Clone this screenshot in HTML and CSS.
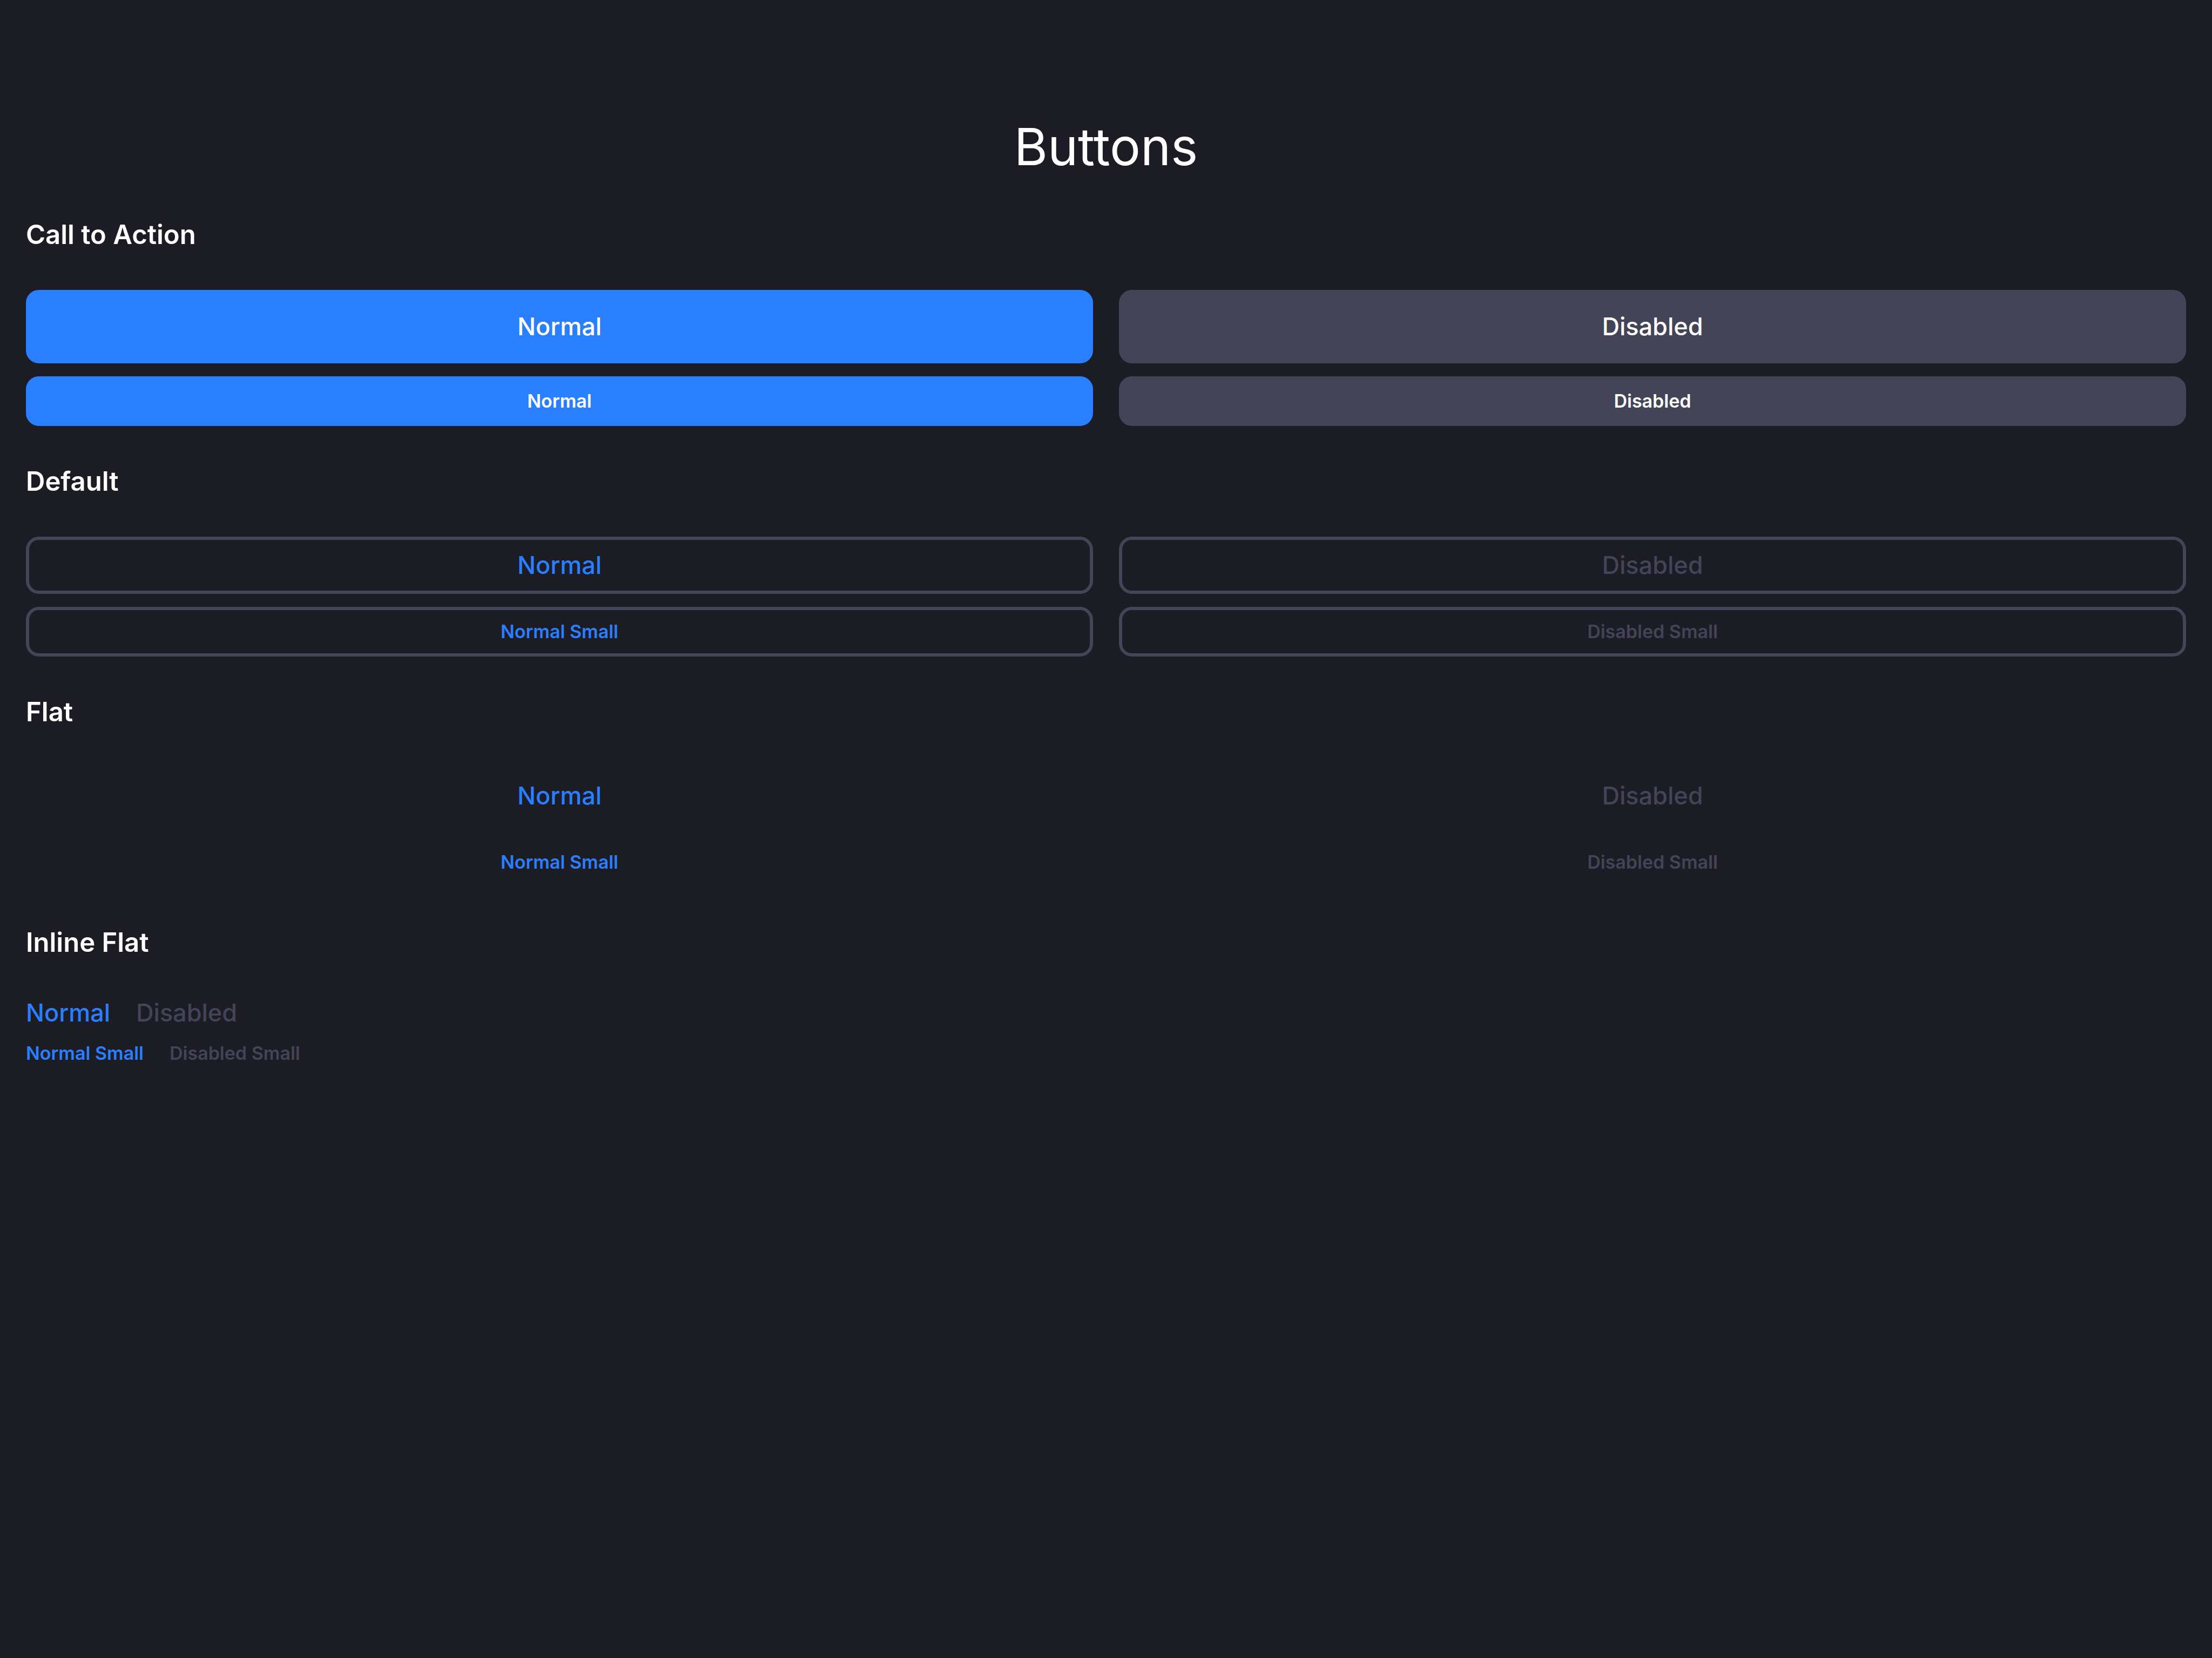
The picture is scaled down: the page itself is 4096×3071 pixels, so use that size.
FILE: index.html
```html
<!DOCTYPE html>
<html lang="en">
<head>
  <meta charset="utf-8">
  <title>Buttons</title>
  <link rel="stylesheet" href="styles.css">
</head>
<body>
  <main class="page">
    <h1 class="title">Buttons</h1>

    <section class="section">
      <h2 class="heading">Call to Action</h2>
      <div class="grid">
        <button type="button" class="btn cta">Normal</button>
        <button type="button" class="btn cta" disabled>Disabled</button>
        <button type="button" class="btn cta small">Normal</button>
        <button type="button" class="btn cta small" disabled>Disabled</button>
      </div>
    </section>

    <section class="section">
      <h2 class="heading">Default</h2>
      <div class="grid">
        <button type="button" class="btn outline">Normal</button>
        <button type="button" class="btn outline" disabled>Disabled</button>
        <button type="button" class="btn outline small">Normal Small</button>
        <button type="button" class="btn outline small" disabled>Disabled Small</button>
      </div>
    </section>

    <section class="section">
      <h2 class="heading">Flat</h2>
      <div class="grid">
        <button type="button" class="btn flat">Normal</button>
        <button type="button" class="btn flat" disabled>Disabled</button>
        <button type="button" class="btn flat small">Normal Small</button>
        <button type="button" class="btn flat small" disabled>Disabled Small</button>
      </div>
    </section>

    <section class="section">
      <h2 class="heading">Inline Flat</h2>
      <div class="inline-rows">
        <div class="inline-row">
          <button type="button" class="btn inline">Normal</button>
          <button type="button" class="btn inline" disabled>Disabled</button>
        </div>
        <div class="inline-row">
          <button type="button" class="btn inline small">Normal Small</button>
          <button type="button" class="btn inline small" disabled>Disabled Small</button>
        </div>
      </div>
    </section>
  </main>
</body>
</html>
```
FILE: styles.css
```css
:root {
  --background: #1c1c24;
  --accent: #2a7fff;
  --muted: #444459;
}

* {
  box-sizing: border-box;
}

body {
  margin: 0;
  background: var(--background);
  color: #fff;
  font-family: Inter, "Liberation Sans", sans-serif;
}

.page {
  display: flex;
  flex-direction: column;
  gap: 73px;
  padding: 212px 48px 48px;
}

.title {
  margin: 0;
  font-size: 95px;
  font-weight: 400;
  line-height: 120px;
  text-align: center;
}

.section {
  display: flex;
  flex-direction: column;
  gap: 72px;
}

.heading {
  margin: 0;
  font-size: 49px;
  font-weight: 600;
  line-height: 60px;
}

.grid {
  display: grid;
  grid-template-columns: 1fr 1fr;
  gap: 24px 48px;
}

.btn {
  margin: 0;
  padding: 19px 24px;
  border: 6px solid transparent;
  border-radius: 24px;
  background: none;
  color: var(--accent);
  font-family: inherit;
  font-size: 45px;
  font-weight: 500;
  line-height: 56px;
}

.btn:disabled {
  color: var(--muted);
}

.btn.small {
  padding: 17px 24px;
  font-size: 34px;
  font-weight: 600;
  line-height: 46px;
}

.btn.cta {
  padding: 34px 24px;
  border-color: var(--accent);
  background: var(--accent);
  color: #fff;
}

.btn.cta.small {
  padding: 17px 24px;
}

.btn.cta:disabled {
  border-color: var(--muted);
  background: var(--muted);
}

.btn.outline {
  border-color: var(--muted);
}

.btn.inline {
  padding: 0;
  border: 0;
}

.inline-rows {
  display: flex;
  flex-direction: column;
  gap: 24px;
}

.inline-row {
  display: flex;
  gap: 48px;
}
```
